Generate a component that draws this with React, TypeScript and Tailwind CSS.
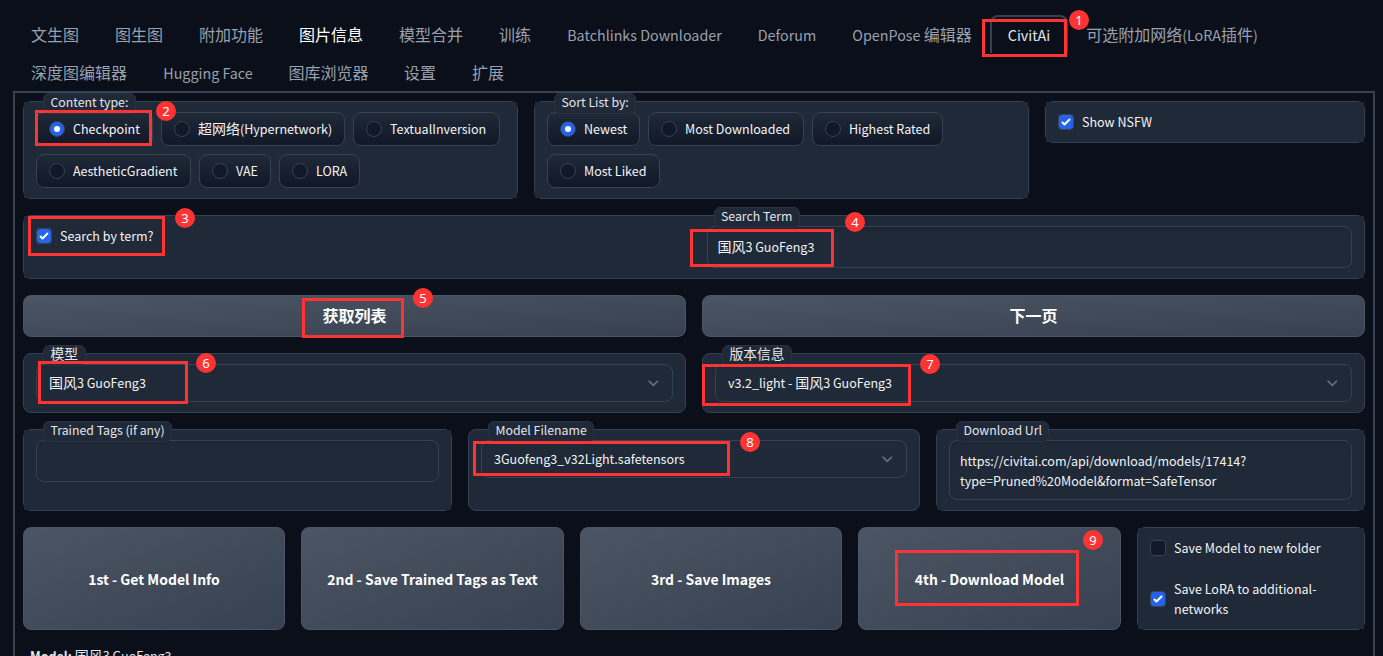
import { useState } from "react";
import type { ReactNode } from "react";

type Tab = {
  label: string;
  width: string;
  hovered?: boolean;
};

const tabRows: Tab[][] = [
  [
    { label: "文生图", width: "w-[84px]" },
    { label: "图生图", width: "w-[84px]" },
    { label: "附加功能", width: "w-[100px]" },
    { label: "图片信息", width: "w-[100px]", hovered: true },
    { label: "模型合并", width: "w-[100px]" },
    { label: "训练", width: "w-[68px]" },
    { label: "Batchlinks Downloader", width: "w-[191px]" },
    { label: "Deforum", width: "w-[94px]" },
    { label: "OpenPose 编辑器", width: "w-[156px]" },
    { label: "CivitAi", width: "w-[78px]" },
    { label: "可选附加网络(LoRA插件)", width: "w-[208px]" },
  ],
  [
    { label: "深度图编辑器", width: "w-[132px]" },
    { label: "Hugging Face", width: "w-[126px]" },
    { label: "图库浏览器", width: "w-[115px]" },
    { label: "设置", width: "w-[68px]" },
    { label: "扩展", width: "w-[68px]" },
  ],
];

const contentTypes = [
  { label: "Checkpoint", width: "w-[117px]" },
  { label: "超网络(Hypernetwork)", width: "w-[184px]" },
  { label: "TextualInversion", width: "w-[147px]" },
  { label: "AestheticGradient", width: "w-[155px]" },
  { label: "VAE", width: "w-[72px]" },
  { label: "LORA", width: "w-[81px]" },
];

const sortOptions = [
  { label: "Newest", width: "w-[93px]" },
  { label: "Most Downloaded", width: "w-[156px]" },
  { label: "Highest Rated", width: "w-[131px]" },
  { label: "Most Liked", width: "w-[113px]" },
];

// Step markers drawn on top of the page
const steps = [
  { n: 1, box: "left-[982px] top-[19px] w-[85px] h-[38px]", dot: "left-[1069px] top-[10px]" },
  { n: 2, box: "left-[35px] top-[110px] w-[117px] h-[36px]", dot: "left-[156px] top-[101px]" },
  { n: 3, box: "left-[28px] top-[216px] w-[137px] h-[40px]", dot: "left-[175px] top-[208px]" },
  { n: 4, box: "left-[690px] top-[229px] w-[144px] h-[38px]", dot: "left-[845px] top-[212px]" },
  { n: 5, box: "left-[302px] top-[298px] w-[102px] h-[40px]", dot: "left-[413px] top-[288px]" },
  { n: 6, box: "left-[38px] top-[361px] w-[150px] h-[43px]", dot: "left-[196px] top-[353px]" },
  { n: 7, box: "left-[702px] top-[364px] w-[209px] h-[42px]", dot: "left-[920px] top-[354px]" },
  { n: 8, box: "left-[473px] top-[441px] w-[257px] h-[35px]", dot: "left-[740px] top-[432px]" },
  { n: 9, box: "left-[895px] top-[550px] w-[184px] h-[56px]", dot: "left-[1083px] top-[530px]" },
];

// Latin runs are set a little smaller than the Chinese characters
function Txt({ children, bold }: { children: string; bold?: boolean }) {
  const parts = children.split(/([\u4e00-\u9fff]+)/).filter(Boolean);
  return (
    <span className="relative -top-px whitespace-pre">
      {parts.map((part, i) =>
        /[\u4e00-\u9fff]/.test(part) ? (
          part
        ) : (
          <span key={i} className={`leading-[0] ${bold ? "text-[0.872em]" : "text-[0.895em]"}`}>
            {part}
          </span>
        )
      )}
    </span>
  );
}

function Block({
  label,
  square,
  className = "",
  children,
}: {
  label?: string;
  square?: boolean;
  className?: string;
  children?: ReactNode;
}) {
  return (
    <div
      className={`relative rounded-lg border border-gray-700 ${square ? "" : "bg-[#1f2937]"} ${className}`}
    >
      <div className={`h-full px-3 py-2.5 ${square ? "bg-[#1f2937]" : ""}`}>{children}</div>
      {label && <BlockLabel text={label} />}
    </div>
  );
}

function BlockLabel({ text }: { text: string }) {
  return (
    <span className="absolute -top-[9px] left-[19px] h-[21px] rounded-md border border-[#283242] bg-[#1f2937] px-[6.5px] text-[13.75px] leading-[17px] text-gray-200">
      <Txt>{text}</Txt>
    </span>
  );
}

function RadioGroup({
  options,
  initial,
}: {
  options: { label: string; width: string }[];
  initial: string;
}) {
  const [value, setValue] = useState(initial);
  return (
    <div className="flex flex-wrap gap-2">
      {options.map((o) => (
        <button
          key={o.label}
          onClick={() => setValue(o.label)}
          className={`flex h-[34px] items-center gap-2 rounded-lg border border-gray-700 bg-gradient-to-b from-[#1f2937] to-[#111827] px-3 text-sm text-gray-100 ${o.width}`}
        >
          <span
            className={`flex h-4 w-4 shrink-0 items-center justify-center rounded-full border border-gray-700 ${
              value === o.label ? "bg-[#2563eb]" : "bg-[#111827]"
            }`}
          >
            {value === o.label && <span className="h-1.5 w-1.5 rounded-full bg-white" />}
          </span>
          <Txt>{o.label}</Txt>
        </button>
      ))}
    </div>
  );
}

function Checkbox({ lines, initial }: { lines: string[]; initial: boolean }) {
  const [checked, setChecked] = useState(initial);
  return (
    <button
      onClick={() => setChecked(!checked)}
      className="flex items-center gap-2 text-left text-sm leading-5 text-gray-100"
    >
      <span
        className={`flex h-4 w-4 shrink-0 items-center justify-center rounded-[4px] border border-gray-700 ${
          checked ? "bg-[#2563eb]" : "bg-[#111827]"
        }`}
      >
        {checked && (
          <svg viewBox="0 0 16 16" className="h-4 w-4 shrink-0 fill-white">
            <path d="M12.207 4.793a1 1 0 010 1.414l-5 5a1 1 0 01-1.414 0l-2-2a1 1 0 011.414-1.414L6.5 9.086l4.293-4.293a1 1 0 011.414 0z" />
          </svg>
        )}
      </span>
      <span className="flex flex-col">
        {lines.map((line) => (
          <Txt key={line}>{line}</Txt>
        ))}
      </span>
    </button>
  );
}

function Select({ value }: { value: string }) {
  return (
    <div className="flex h-[38px] items-center justify-between rounded-lg border border-gray-700 px-3 text-sm text-gray-100">
      <Txt>{value}</Txt>
      <svg viewBox="0 0 14 14" className="h-3.5 w-3.5 fill-none stroke-gray-500" strokeWidth={1.6}>
        <path d="M2.6 4.8L7.3 9.4l4.7-4.6" />
      </svg>
    </div>
  );
}

function TextBox({ lines }: { lines: string[] }) {
  return (
    <div className="flex min-h-[42px] flex-col rounded-lg border border-gray-700 px-2.5 pt-[10px] pb-2 text-sm leading-5 text-gray-100 shadow-[inset_0_2px_4px_rgba(0,0,0,0.06)]">
      {lines.map((line) => (
        <Txt key={line}>{line}</Txt>
      ))}
    </div>
  );
}

function Button({ children, className = "" }: { children: string; className?: string }) {
  return (
    <button
      className={`rounded-lg border border-gray-600 bg-gradient-to-br from-[#4b5563] to-[#374151] text-base font-bold text-white ${className}`}
    >
      <Txt bold>{children}</Txt>
    </button>
  );
}

export default function App() {
  const [active, setActive] = useState("CivitAi");

  return (
    <div className="relative h-[656px] w-[1383px] overflow-hidden bg-[#0b0f19] pt-[15px] pr-2 pl-[13px] font-['Noto_Sans_CJK_SC',sans-serif]">
      {/* Tabs */}
      <nav>
        {tabRows.map((row, i) => (
          <div key={i} className="flex h-[38px]">
            {row.map((tab) => (
              <button
                key={tab.label}
                onClick={() => setActive(tab.label)}
                className={`flex items-center justify-center rounded-t-lg border-2 border-b-0 text-base ${tab.width} ${
                  active === tab.label ? "border-gray-700 text-gray-200" : "border-transparent"
                } ${tab.hovered ? "text-white" : active === tab.label ? "" : "text-gray-400"}`}
              >
                <Txt>{tab.label}</Txt>
              </button>
            ))}
          </div>
        ))}
      </nav>

      <main className="flex h-[620px] flex-col gap-4 border-2 border-gray-700 p-2">
        <div className="flex h-[98px] items-start gap-4">
          <Block label="Content type:" square className="h-full w-[495px]">
            <RadioGroup options={contentTypes} initial="Checkpoint" />
          </Block>
          <Block label="Sort List by:" square className="h-full w-[495px]">
            <RadioGroup options={sortOptions} initial="Newest" />
          </Block>
          <Block square className="flex-1">
            <Checkbox lines={["Show NSFW"]} initial={true} />
          </Block>
        </div>

        <div className="h-16 rounded-lg border border-gray-700">
          <div className="flex h-full bg-[#1f2937]">
            <div className="flex-1 px-3 py-2.5">
              <Checkbox lines={["Search by term?"]} initial={true} />
            </div>
            <div className="relative w-[669.5px] px-3 py-2.5">
              <TextBox lines={["国风3 GuoFeng3"]} />
              <BlockLabel text="Search Term" />
            </div>
          </div>
        </div>

        <div className="grid h-[42px] grid-cols-2 gap-4">
          <Button>获取列表</Button>
          <Button>下一页</Button>
        </div>

        <div className="grid h-[60px] grid-cols-2 gap-4">
          <Block label="模型">
            <Select value="国风3 GuoFeng3" />
          </Block>
          <Block label="版本信息">
            <Select value="v3.2_light - 国风3 GuoFeng3" />
          </Block>
        </div>

        <div className="flex h-[82px] gap-4">
          <Block label="Trained Tags (if any)" square className="w-[429px]">
            <TextBox lines={[]} />
          </Block>
          <Block label="Model Filename" className="w-[452px]">
            <Select value="3Guofeng3_v32Light.safetensors" />
          </Block>
          <Block label="Download Url" square className="w-[429px]">
            <TextBox
              lines={[
                "https://civitai.com/api/download/models/17414?",
                "type=Pruned%20Model&format=SafeTensor",
              ]}
            />
          </Block>
        </div>

        <div className="flex h-[103px] gap-4">
          <Button className="w-[262px]">1st - Get Model Info</Button>
          <Button className="w-[263px]">2nd - Save Trained Tags as Text</Button>
          <Button className="w-[262px]">3rd - Save Images</Button>
          <Button className="w-[263px]">4th - Download Model</Button>
          <Block square className="w-[228px]">
            <div className="flex flex-col gap-[21px]">
              <Checkbox lines={["Save Model to new folder"]} initial={false} />
              <Checkbox lines={["Save LoRA to additional-", "networks"]} initial={true} />
            </div>
          </Block>
        </div>

        <p className="px-[7px] text-sm leading-5 text-gray-200">
          <b>
            <Txt>Model:</Txt>
          </b>
          <Txt> 国风3 GuoFeng3</Txt>
        </p>
      </main>

      {steps.map((s) => (
        <div key={s.n}>
          <div className={`pointer-events-none absolute border-3 border-[#fd3434] ${s.box}`} />
          <div
            className={`absolute flex h-5 w-5 items-center justify-center rounded-full bg-[#fd3434] font-['Noto_Sans',sans-serif] text-[13px] leading-none text-white ${s.dot}`}
          >
            {s.n}
          </div>
        </div>
      ))}
    </div>
  );
}
